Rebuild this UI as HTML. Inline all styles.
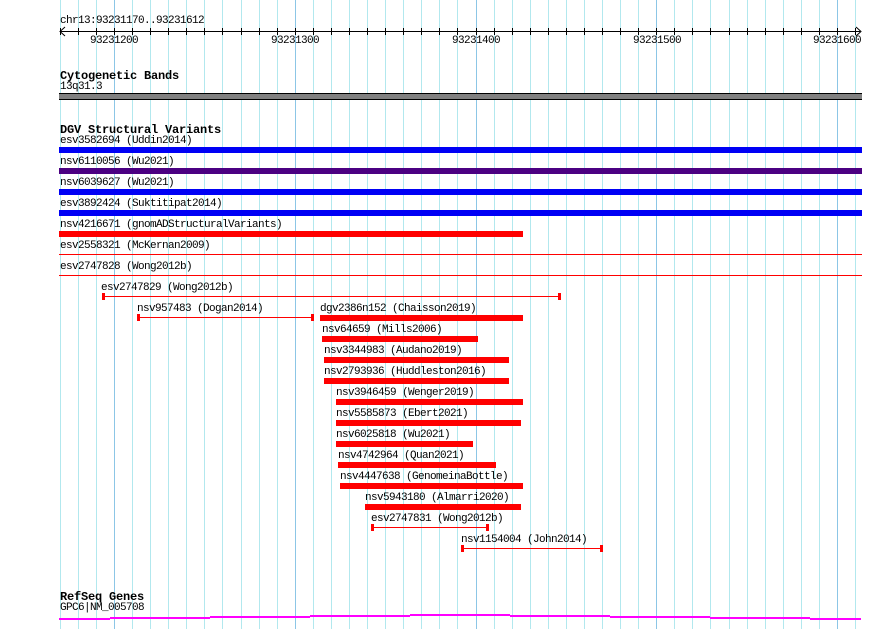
<!DOCTYPE html>
<html><head><meta charset="utf-8">
<style>
body{margin:0;background:#fff;}
#c{position:relative;width:890px;height:629px;overflow:hidden;background:#fff;font-family:"Liberation Mono",monospace;}
.g{position:absolute;top:0;height:629px;width:1px;background:#b2e8ee;}
.g.m{background:#8cc6e6;}
.t{position:absolute;font-size:11px;letter-spacing:-0.6px;line-height:11px;margin-top:1px;color:#000;white-space:pre;}
.h{position:absolute;font-size:12px;letter-spacing:-0.2px;line-height:12px;margin-top:2px;font-weight:bold;color:#000;white-space:pre;}
.b{position:absolute;height:6px;}
.r{background:#f00;}
.ln{position:absolute;height:1px;background:#f00;}
.cap{position:absolute;width:3px;height:7px;background:#f00;}
.tk{position:absolute;top:28px;width:1px;height:7px;background:#000;}
.mg{position:absolute;height:2px;background:#f0f;}
</style></head><body>
<div id="c">
<div id="grid"></div>
<div class="t" style="left:60px;top:15px">chr13:93231170..93231612</div>
<div style="position:absolute;left:60px;top:31px;width:800px;height:1px;background:#000"></div>
<svg style="position:absolute;left:58px;top:26px" width="10" height="12"><path d="M7 1 L2 5.5 L7 10" stroke="#000" fill="none"/></svg>
<svg style="position:absolute;left:854px;top:26px" width="10" height="12"><path d="M2 1 L7 5.5 L2 10" stroke="#000" fill="none"/></svg>
<div id="ticks"></div>
<div class="t" style="left:90px;top:35px">93231200</div>
<div class="t" style="left:271px;top:35px">93231300</div>
<div class="t" style="left:452px;top:35px">93231400</div>
<div class="t" style="left:633px;top:35px">93231500</div>
<div class="t" style="left:813px;top:35px">93231600</div>

<div class="h" style="left:60px;top:68px">Cytogenetic Bands</div>
<div class="t" style="left:60px;top:81px">13q31.3</div>
<div style="position:absolute;left:59px;top:93px;width:803px;height:5px;background:#808080;border-top:1px solid #000;border-bottom:1px solid #000"></div>

<div class="h" style="left:60px;top:122px">DGV Structural Variants</div>
<div class="t" style="left:60px;top:135px">esv3582694 (Uddin2014)</div>
<div class="b" style="left:59px;top:147px;width:803px;background:#0000f5"></div>
<div class="t" style="left:60px;top:156px">nsv6110056 (Wu2021)</div>
<div class="b" style="left:59px;top:168px;width:803px;background:#4b0082"></div>
<div class="t" style="left:60px;top:177px">nsv6039627 (Wu2021)</div>
<div class="b" style="left:59px;top:189px;width:803px;background:#0000f5"></div>
<div class="t" style="left:60px;top:198px">esv3892424 (Suktitipat2014)</div>
<div class="b" style="left:59px;top:210px;width:803px;background:#0000f5"></div>
<div class="t" style="left:60px;top:219px">nsv4216671 (gnomADStructuralVariants)</div>
<div class="b r" style="left:59px;top:231px;width:464px"></div>
<div class="t" style="left:60px;top:240px">esv2558321 (McKernan2009)</div>
<div class="ln" style="left:59px;top:254px;width:803px"></div>
<div class="t" style="left:60px;top:261px">esv2747828 (Wong2012b)</div>
<div class="ln" style="left:59px;top:275px;width:803px"></div>

<div class="t" style="left:101px;top:282px">esv2747829 (Wong2012b)</div>
<div class="ln" style="left:102px;top:296px;width:458px"></div>
<div class="cap" style="left:102px;top:293px"></div>
<div class="cap" style="left:558px;top:293px"></div>

<div class="t" style="left:137px;top:303px">nsv957483 (Dogan2014)</div>
<div class="ln" style="left:137px;top:317px;width:177px"></div>
<div class="cap" style="left:137px;top:314px"></div>
<div class="cap" style="left:311px;top:314px"></div>

<div class="t" style="left:320px;top:303px">dgv2386n152 (Chaisson2019)</div>
<div class="b r" style="left:320px;top:315px;width:203px"></div>
<div class="t" style="left:322px;top:324px">nsv64659 (Mills2006)</div>
<div class="b r" style="left:322px;top:336px;width:156px"></div>
<div class="t" style="left:324px;top:345px">nsv3344983 (Audano2019)</div>
<div class="b r" style="left:324px;top:357px;width:185px"></div>
<div class="t" style="left:324px;top:366px">nsv2793936 (Huddleston2016)</div>
<div class="b r" style="left:324px;top:378px;width:185px"></div>
<div class="t" style="left:336px;top:387px">nsv3946459 (Wenger2019)</div>
<div class="b r" style="left:336px;top:399px;width:187px"></div>
<div class="t" style="left:336px;top:408px">nsv5585873 (Ebert2021)</div>
<div class="b r" style="left:336px;top:420px;width:185px"></div>
<div class="t" style="left:336px;top:429px">nsv6025818 (Wu2021)</div>
<div class="b r" style="left:336px;top:441px;width:137px"></div>
<div class="t" style="left:338px;top:450px">nsv4742964 (Quan2021)</div>
<div class="b r" style="left:338px;top:462px;width:158px"></div>
<div class="t" style="left:340px;top:471px">nsv4447638 (GenomeinaBottle)</div>
<div class="b r" style="left:340px;top:483px;width:183px"></div>
<div class="t" style="left:365px;top:492px">nsv5943180 (Almarri2020)</div>
<div class="b r" style="left:365px;top:504px;width:156px"></div>
<div class="t" style="left:371px;top:513px">esv2747831 (Wong2012b)</div>
<div class="ln" style="left:372px;top:527px;width:117px"></div>
<div class="cap" style="left:371px;top:524px"></div>
<div class="cap" style="left:486px;top:524px"></div>
<div class="t" style="left:461px;top:534px">nsv1154004 (John2014)</div>
<div class="ln" style="left:461px;top:548px;width:142px"></div>
<div class="cap" style="left:461px;top:545px"></div>
<div class="cap" style="left:600px;top:545px"></div>

<div class="h" style="left:60px;top:589px">RefSeq Genes</div>
<div class="t" style="left:60px;top:602px">GPC6|NM_005708</div>
<div class="mg" style="left:59px;top:618px;width:51px"></div>
<div class="mg" style="left:110px;top:617px;width:100px"></div>
<div class="mg" style="left:210px;top:616px;width:100px"></div>
<div class="mg" style="left:310px;top:615px;width:100px"></div>
<div class="mg" style="left:410px;top:614px;width:100px"></div>
<div class="mg" style="left:510px;top:615px;width:100px"></div>
<div class="mg" style="left:610px;top:616px;width:100px"></div>
<div class="mg" style="left:710px;top:617px;width:100px"></div>
<div class="mg" style="left:810px;top:618px;width:51px"></div>
</div>
<script>
var g=document.getElementById('grid'),tk=document.getElementById('ticks'),h='',t='';
for(var k=0;k<45;k++){var x=Math.round(59.8+k*18.075);var m=((k-3)%10===0);
h+='<div class="g'+(m?' m':'')+'" style="left:'+x+'px"></div>';
t+='<div class="tk" style="left:'+x+'px"></div>';}
g.innerHTML=h;tk.innerHTML=t;
</script>
</body></html>
